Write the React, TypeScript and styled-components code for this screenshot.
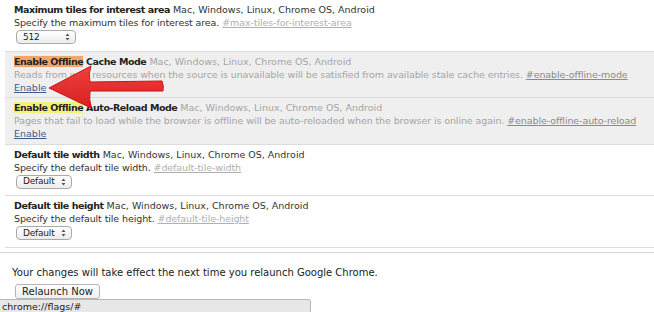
import * as React from 'react'
import styled, { createGlobalStyle } from 'styled-components'

const GlobalStyle = createGlobalStyle`
  html, body {
    margin: 0;
    padding: 0;
    background: #fff;
  }
  body {
    font-family: "DejaVu Sans", "Liberation Sans", sans-serif;
    font-size: 9.5px;
    color: #222;
  }
`

const Page = styled.div`
  position: relative;
  width: 654px;
  height: 312px;
  overflow: hidden;
`

const List = styled.div`
  margin-left: 5px;
  display: flex;
  flex-direction: column;
`

const Row = styled.div<{ $unavailable?: boolean }>`
  padding: 3px 10px 3.5px 9px;
  line-height: 13px;
  background: ${p => (p.$unavailable ? '#efefef' : '#fff')};
  border-bottom: 1px solid #dcdcdc;
`

const Title = styled.span<{ $mark?: string }>`
  font-weight: bold;
  letter-spacing: -0.45px;
  color: #222;
  mark {
    background: ${p => p.$mark || 'transparent'};
    color: inherit;
  }
`

const Platforms = styled.span<{ $dim?: boolean }>`
  color: ${p => (p.$dim ? '#a5a5a5' : '#333')};
`

const Description = styled.div<{ $dim?: boolean }>`
  color: ${p => (p.$dim ? '#a5a5a5' : '#333')};
  letter-spacing: -0.1px;
  white-space: nowrap;
`

const Permalink = styled.a<{ $dim?: boolean }>`
  color: ${p => (p.$dim ? '#8a8a8a' : '#b0b0b0')};
  text-decoration: underline;
`

const EnableLink = styled.a`
  display: block;
  color: #3e5a8c;
  text-decoration: underline;
`

const Select = styled.div<{ $width: number }>`
  margin: 1px 0 3px 2px;
  width: ${p => p.$width}px;
  height: 14px;
  box-sizing: border-box;
  border: 1px solid #a9a9a9;
  border-radius: 4px;
  background: linear-gradient(#fff, #ececec);
  display: flex;
  align-items: center;
  justify-content: space-between;
  padding: 0 5px 0 6px;
  font-size: 9px;
  letter-spacing: -0.2px;
  color: #222;
`

const Footer = styled.div`
  border-top: 1px solid #d6d6d6;
  margin-top: 4px;
  padding: 13px 12px 0;
  font-size: 10px;
  color: #222;
  line-height: 14px;
`

const ButtonRow = styled.div`
  margin-top: 4px;
`

const Button = styled.div`
  display: inline-block;
  margin-left: 3px;
  padding: 0 6px;
  height: 13px;
  line-height: 13px;
  border: 1px solid #b5b5b5;
  border-radius: 3px;
  background: linear-gradient(#fff, #eee);
  font-size: 10px;
`

const StatusBubble = styled.div`
  position: absolute;
  left: 0;
  bottom: -2px;
  width: 311px;
  height: 15px;
  box-sizing: border-box;
  background: #e7e7e7;
  border: 1px solid #b8b8b8;
  border-left: none;
  border-top-right-radius: 3px;
  padding-left: 2px;
  font-size: 9.5px;
  line-height: 13px;
  color: #222;
`

const Arrow = styled.svg`
  position: absolute;
  left: 46px;
  top: 63px;
`

const Updown = () => (
  <svg width="5" height="8" viewBox="0 0 5 8">
    <path d="M2.5 0.5 L4.5 3 H0.5 Z M2.5 7.5 L4.5 5 H0.5 Z" fill="#555" />
  </svg>
)

export default function App() {
  return (
    <Page>
      <GlobalStyle />
      <List>
        <Row>
          <Title>Maximum tiles for interest area</Title>{' '}
          <Platforms>Mac, Windows, Linux, Chrome OS, Android</Platforms>
          <Description>
            Specify the maximum tiles for interest area.{' '}
            <Permalink>#max-tiles-for-interest-area</Permalink>
          </Description>
          <Select $width={60}>
            <span>512</span>
            <Updown />
          </Select>
        </Row>
        <Row $unavailable>
          <Title $mark="#f2a56c">
            <mark>Enable Offline</mark> Cache Mode
          </Title>{' '}
          <Platforms $dim>Mac, Windows, Linux, Chrome OS, Android</Platforms>
          <Description $dim>
            Reads from web resources when the source is unavailable will be satisfied from available stale cache entries.{' '}
            <Permalink $dim>#enable-offline-mode</Permalink>
          </Description>
          <EnableLink>Enable</EnableLink>
        </Row>
        <Row $unavailable>
          <Title $mark="#f6f07a">
            <mark>Enable Offline</mark> Auto-Reload Mode
          </Title>{' '}
          <Platforms $dim>Mac, Windows, Linux, Chrome OS, Android</Platforms>
          <Description $dim>
            Pages that fail to load while the browser is offline will be auto-reloaded when the browser is online again.{' '}
            <Permalink $dim>#enable-offline-auto-reload</Permalink>
          </Description>
          <EnableLink>Enable</EnableLink>
        </Row>
        <Row>
          <Title>Default tile width</Title>{' '}
          <Platforms>Mac, Windows, Linux, Chrome OS, Android</Platforms>
          <Description>
            Specify the default tile width. <Permalink>#default-tile-width</Permalink>
          </Description>
          <Select $width={56}>
            <span>Default</span>
            <Updown />
          </Select>
        </Row>
        <Row>
          <Title>Default tile height</Title>{' '}
          <Platforms>Mac, Windows, Linux, Chrome OS, Android</Platforms>
          <Description>
            Specify the default tile height. <Permalink>#default-tile-height</Permalink>
          </Description>
          <Select $width={56}>
            <span>Default</span>
            <Updown />
          </Select>
        </Row>
      </List>
      <Footer>
        Your changes will take effect the next time you relaunch Google Chrome.
        <ButtonRow>
          <Button>Relaunch Now</Button>
        </ButtonRow>
      </Footer>
      <StatusBubble>chrome://flags/#</StatusBubble>
      <Arrow width="124" height="50" viewBox="0 0 124 50">
        <defs>
          <linearGradient id="arrowFill" x1="0" y1="0" x2="0" y2="1">
            <stop offset="0" stopColor="#f0413a" />
            <stop offset="1" stopColor="#d81f24" />
          </linearGradient>
        </defs>
        <path
          d="M3 25 L45 3 Q42 11 44 19 L116 18 Q118 23 117 28 L44 28 Q43 36 45 45 Z"
          fill="url(#arrowFill)"
          stroke="#c8151b"
          strokeWidth="1"
          strokeLinejoin="round"
        />
      </Arrow>
    </Page>
  )
}
